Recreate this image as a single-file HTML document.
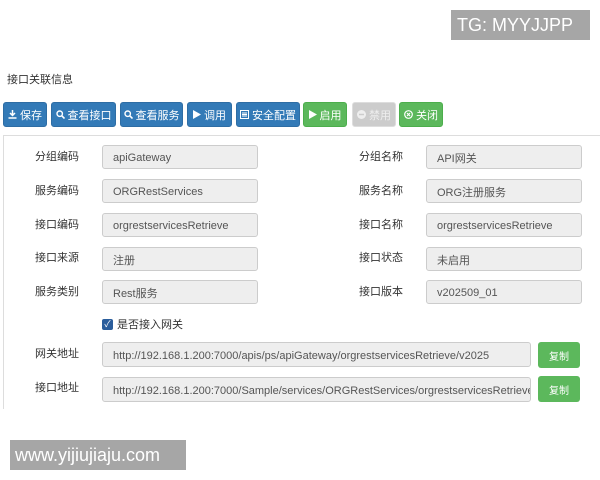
<!DOCTYPE html>
<html><head><meta charset="utf-8"><style>
body{margin:0;width:600px;height:480px;background:#fff;position:relative;overflow:hidden;font-family:"Liberation Sans","Noto Sans CJK SC",sans-serif;color:#333}
.a{position:absolute}
.title{left:7px;top:71px;font-size:11px}
.btn{position:absolute;top:102px;height:25px;border-radius:3px;color:#fff;font-size:11px;display:flex;align-items:center;justify-content:center;gap:3px;white-space:nowrap;box-sizing:border-box}
.btn svg{flex:none}
.b{background:#337ab7;border:1px solid #2e6da4}
.g{background:#5cb85c;border:1px solid #4cae4c}
.d{background:#ccc;border:1px solid #ddd;color:#eee}
.panel{left:3px;top:135px;width:597px;height:273px;border-left:1px solid #ddd;border-top:1px solid #ddd}
.lbl{position:absolute;font-size:11px;color:#333;line-height:14px}
.inp{position:absolute;height:24px;box-sizing:border-box;background:#eee;border:1px solid #ccc;border-radius:3px;font-size:11px;display:flex;align-items:center;padding-left:10px;padding-top:2px;color:#555;white-space:nowrap;overflow:hidden}
.cp{position:absolute;left:538px;width:42px;height:26px;background:#5cb85c;border-radius:3px;color:#fff;font-size:10px;display:flex;align-items:center;justify-content:center}
.wm{background:#a6a6a6;color:#fff;font-size:18px}
</style></head><body>
<div class="a wm" style="left:451px;top:10px;width:139px;height:30px;line-height:30px;padding-left:6px;box-sizing:border-box">TG: MYYJJPP</div>
<div class="a title">接口关联信息</div>
<div class="btn b" style="left:3px;width:44px"><svg width="9" height="9" viewBox="0 0 9 9"><path d="M4.5 0v5M2 3l2.5 2.5L7 3M0.5 8h8" stroke="#fff" stroke-width="1.5" fill="none"/></svg>保存</div>
<div class="btn b" style="left:51px;width:65px"><svg width="9" height="9" viewBox="0 0 9 9"><circle cx="3.7" cy="3.7" r="2.7" stroke="#fff" stroke-width="1.4" fill="none"/><path d="M5.7 5.7L8.5 8.5" stroke="#fff" stroke-width="1.6"/></svg>查看接口</div>
<div class="btn b" style="left:120px;width:63px"><svg width="9" height="9" viewBox="0 0 9 9"><circle cx="3.7" cy="3.7" r="2.7" stroke="#fff" stroke-width="1.4" fill="none"/><path d="M5.7 5.7L8.5 8.5" stroke="#fff" stroke-width="1.6"/></svg>查看服务</div>
<div class="btn b" style="left:187px;width:45px"><svg width="8" height="9" viewBox="0 0 8 9"><path d="M0 0L8 4.5 0 9z" fill="#fff"/></svg>调用</div>
<div class="btn b" style="left:236px;width:64px"><svg width="9" height="9" viewBox="0 0 9 9"><rect x="0.5" y="0.5" width="8" height="8" stroke="#fff" fill="none"/><path d="M2 3h5M2 4.5h5M2 6h5" stroke="#fff"/></svg>安全配置</div>
<div class="btn g" style="left:303px;width:44px"><svg width="8" height="9" viewBox="0 0 8 9"><path d="M0 0L8 4.5 0 9z" fill="#fff"/></svg>启用</div>
<div class="btn d" style="left:352px;width:44px"><svg width="9" height="9" viewBox="0 0 9 9"><circle cx="4.5" cy="4.5" r="4.5" fill="#eee"/><path d="M2 4.5h5" stroke="#ccc" stroke-width="1.5"/></svg>禁用</div>
<div class="btn g" style="left:399px;width:44px"><svg width="9" height="9" viewBox="0 0 9 9"><circle cx="4.5" cy="4.5" r="3.8" stroke="#fff" stroke-width="1.2" fill="none"/><path d="M3 3l3 3M6 3l-3 3" stroke="#fff" stroke-width="1.2"/></svg>关闭</div>
<div class="a panel"></div>

<div class="lbl" style="left:35px;top:150px">分组编码</div><div class="inp" style="left:102px;top:145px;width:156px">apiGateway</div>
<div class="lbl" style="left:359px;top:150px">分组名称</div><div class="inp" style="left:426px;top:145px;width:156px">API网关</div>
<div class="lbl" style="left:35px;top:184px">服务编码</div><div class="inp" style="left:102px;top:179px;width:156px">ORGRestServices</div>
<div class="lbl" style="left:359px;top:184px">服务名称</div><div class="inp" style="left:426px;top:179px;width:156px">ORG注册服务</div>
<div class="lbl" style="left:35px;top:218px">接口编码</div><div class="inp" style="left:102px;top:213px;width:156px">orgrestservicesRetrieve</div>
<div class="lbl" style="left:359px;top:218px">接口名称</div><div class="inp" style="left:426px;top:213px;width:156px">orgrestservicesRetrieve</div>
<div class="lbl" style="left:35px;top:251px">接口来源</div><div class="inp" style="left:102px;top:247px;width:156px">注册</div>
<div class="lbl" style="left:359px;top:251px">接口状态</div><div class="inp" style="left:426px;top:247px;width:156px">未启用</div>
<div class="lbl" style="left:35px;top:285px">服务类别</div><div class="inp" style="left:102px;top:280px;width:156px">Rest服务</div>
<div class="lbl" style="left:359px;top:285px">接口版本</div><div class="inp" style="left:426px;top:280px;width:156px">v202509_01</div>

<div class="a" style="left:102px;top:319px;width:11px;height:11px;background:#2a5d9c;border-radius:2px;color:#fff;font-size:9px;line-height:11px;text-align:center">✓</div>
<div class="lbl" style="left:117px;top:318px">是否接入网关</div>
<div class="lbl" style="left:35px;top:347px">网关地址</div><div class="inp" style="left:102px;top:342px;width:429px;height:25px">http://192.168.1.200:7000/apis/ps/apiGateway/orgrestservicesRetrieve/v2025</div>
<div class="cp" style="top:342px">复制</div>
<div class="lbl" style="left:35px;top:381px">接口地址</div><div class="inp" style="left:102px;top:377px;width:429px;height:25px">http://192.168.1.200:7000/Sample/services/ORGRestServices/orgrestservicesRetrieve</div>
<div class="cp" style="top:376px">复制</div>

<div class="a wm" style="left:10px;top:440px;width:176px;height:30px;line-height:30px;padding-left:5px;box-sizing:border-box">www.yijiujiaju.com</div>
</body></html>
